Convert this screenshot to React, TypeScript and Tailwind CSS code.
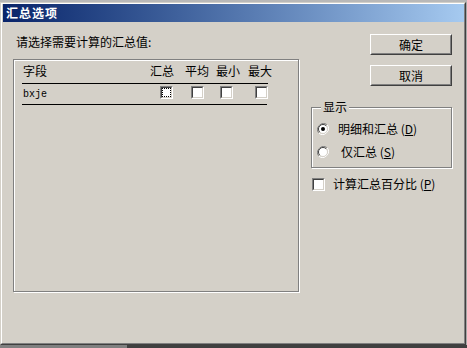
import React from "react";

const CJK = "font-['Noto_Sans_CJK_SC','Noto_Sans',sans-serif]";

function Check({ focus = false }: { focus?: boolean }) {
  return (
    <div className="w-[13px] h-[13px] border border-t-[#808080] border-l-[#808080] border-b-white border-r-white">
      <div className="w-full h-full border border-t-[#404040] border-l-[#404040] border-b-[#d4d0c8] border-r-[#d4d0c8] bg-white">
        {focus ? <div className="w-full h-full border border-dotted border-black" /> : null}
      </div>
    </div>
  );
}

function Radio({ checked = false }: { checked?: boolean }) {
  return (
    <svg width="12" height="12" viewBox="0 0 12 12" className="shrink-0">
      <path d="M10.2 1.8 A6 6 0 0 0 1.8 10.2" fill="none" stroke="#808080" strokeWidth="1" />
      <path d="M1.8 10.2 A6 6 0 0 0 10.2 1.8" fill="none" stroke="#ffffff" strokeWidth="1" />
      <circle cx="6" cy="6" r="4.6" fill="#ffffff" />
      <path d="M9.2 2.8 A4.5 4.5 0 0 0 2.8 9.2" fill="none" stroke="#404040" strokeWidth="1" />
      <path d="M2.8 9.2 A4.5 4.5 0 0 0 9.2 2.8" fill="none" stroke="#d4d0c8" strokeWidth="1" />
      {checked ? <circle cx="6" cy="6" r="2" fill="#000" /> : null}
    </svg>
  );
}

function Button({ label }: { label: string }) {
  return (
    <div className="w-[82px] h-[21px] border border-t-white border-l-white border-b-[#404040] border-r-[#404040]">
      <div className={`w-full h-full border border-t-[#d4d0c8] border-l-[#d4d0c8] border-b-[#808080] border-r-[#808080] flex items-center justify-center text-[12px] leading-[14px] text-black ${CJK}`}>
        {label}
      </div>
    </div>
  );
}

export default function App() {
  return (
    <div className={`w-[467px] h-[348px] bg-[#a8a8a8] flex flex-col overflow-hidden ${CJK}`}>
      <div className="h-[2px] shrink-0 bg-[#b8b8b8]" />
      <div className="w-[466px] h-[343px] shrink-0 border border-t-[#d4d0c8] border-l-[#d4d0c8] border-b-[#404040] border-r-[#404040]">
        <div className="w-full h-full border border-t-white border-l-white border-b-[#808080] border-r-[#808080] bg-[#d4d0c8] flex flex-col">
          <div className="ml-[1px] h-[18px] shrink-0 bg-gradient-to-r from-[#0a246a] to-[#a6caf0] flex items-center pl-[3px]">
            <span className="text-white font-bold text-[12px] leading-[14px] tracking-[1px]">汇总选项</span>
          </div>
          <div className="flex flex-row pl-[11px]">
            <div className="w-[287px] flex flex-col">
              <div className="pt-[13px] pl-[3px] text-[12px] leading-[14px] text-black">请选择需要计算的汇总值:</div>
              <div className="mt-[10px] w-[286px] h-[233px] border border-[#808080] shadow-[inset_1px_1px_0_#ffffff,1px_1px_0_#ffffff] pl-[8px] pt-[4px]">
                <div className="grid grid-cols-[128px_35px_31px_32px_24px] text-[12px] leading-[14px] text-black whitespace-nowrap">
                  <div className="pl-[1px]">字段</div>
                  <div>汇总</div>
                  <div>平均</div>
                  <div>最小</div>
                  <div>最大</div>
                </div>
                <div className="mt-[5px] w-[246px] h-[1px] bg-black" />
                <div className="grid grid-cols-[128px_35px_31px_32px_24px] h-[20px] items-center">
                  <div className="pl-[1px] pt-[2px] font-['Liberation_Mono',monospace] text-[10px] leading-[12px] text-black">bxje</div>
                  <div className="pl-[10px] -mt-[4px]"><Check focus /></div>
                  <div className="pl-[6px] -mt-[4px]"><Check /></div>
                  <div className="pl-[4px] -mt-[4px]"><Check /></div>
                  <div className="pl-[7px] -mt-[4px]"><Check /></div>
                </div>
                <div className="w-[245px] h-[1px] bg-black" />
              </div>
            </div>
            <div className="ml-[11px] w-[141px] flex flex-col">
              <div className="ml-[59px] mt-[12px]"><Button label="确定" /></div>
              <div className="ml-[59px] mt-[10px]"><Button label="取消" /></div>
              <div className="relative mt-[21px] w-[141px] h-[61px] border border-[#808080] shadow-[inset_1px_1px_0_#ffffff,1px_1px_0_#ffffff] text-[12px] leading-[14px] text-black">
                <span className="absolute -top-[8px] left-[9px] px-[2px] bg-[#d4d0c8]">显示</span>
                <div className="flex items-center ml-[5px] mt-[15px] h-[12px]">
                  <Radio checked />
                  <span className="ml-[9px]">明细和汇总 (<span className="underline">D</span>)</span>
                </div>
                <div className="flex items-center ml-[5px] mt-[11px] h-[12px]">
                  <Radio />
                  <span className="ml-[12px]">仅汇总 (<span className="underline">S</span>)</span>
                </div>
              </div>
              <div className="flex items-center ml-[1px] mt-[9px] text-[12px] leading-[14px] text-black">
                <Check />
                <span className="ml-[8px]">计算汇总百分比 (<span className="underline">P</span>)</span>
              </div>
            </div>
          </div>
        </div>
      </div>
      <div className="flex flex-1">
        <div className="w-[127px] bg-[#808080]" />
        <div className="flex-1 bg-[#404040]" />
      </div>
    </div>
  );
}
